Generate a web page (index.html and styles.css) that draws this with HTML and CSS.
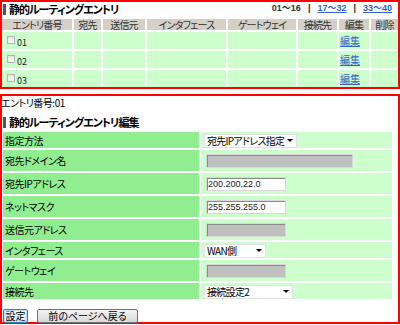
FILE: index.html
```html
<!DOCTYPE html>
<html lang="ja">
<head>
  <meta charset="UTF-8" />
  <title>静的ルーティングエントリ</title>
  <link rel="stylesheet" href="styles.css">
</head>
<body>
  <div class="box list-box">
    <div class="box-head">
      <h2 class="title">静的ルーティングエントリ</h2>
      <div class="pager">
        <span class="current">01～16</span>
        <span class="sep">|</span>
        <a href="#">17～32</a>
        <span class="sep">|</span>
        <a href="#">33～40</a>
      </div>
    </div>
    <table class="list">
      <thead>
        <tr>
          <th class="c-no">エントリ番号</th>
          <th class="c-dst">宛先</th>
          <th class="c-src">送信元</th>
          <th class="c-if">インタフェース</th>
          <th class="c-gw">ゲートウェイ</th>
          <th class="c-con">接続先</th>
          <th class="c-edit">編集</th>
          <th class="c-del">削除</th>
        </tr>
      </thead>
      <tbody>
        <tr>
          <td class="no"><span class="check"></span><span class="num">01</span></td>
          <td></td><td></td><td></td><td></td><td></td>
          <td class="edit"><a href="#">編集</a></td>
          <td></td>
        </tr>
        <tr>
          <td class="no"><span class="check"></span><span class="num">02</span></td>
          <td></td><td></td><td></td><td></td><td></td>
          <td class="edit"><a href="#">編集</a></td>
          <td></td>
        </tr>
        <tr>
          <td class="no"><span class="check"></span><span class="num">03</span></td>
          <td></td><td></td><td></td><td></td><td></td>
          <td class="edit"><a href="#">編集</a></td>
          <td></td>
        </tr>
      </tbody>
    </table>
  </div>

  <div class="box edit-box">
    <div class="entry-no">エントリ番号:01</div>
    <h2 class="title">静的ルーティングエントリ編集</h2>
    <table class="form">
      <tr class="row-sel">
        <th>指定方法</th>
        <td><span class="sel sel-method"><select><option>宛先IPアドレス指定</option></select></span></td>
      </tr>
      <tr>
        <th>宛先ドメイン名</th>
        <td><input type="text" class="text text-long" disabled></td>
      </tr>
      <tr>
        <th>宛先IPアドレス</th>
        <td><input type="text" class="text" value="200.200.22.0"></td>
      </tr>
      <tr>
        <th>ネットマスク</th>
        <td><input type="text" class="text" value="255.255.255.0"></td>
      </tr>
      <tr>
        <th>送信元アドレス</th>
        <td><input type="text" class="text" disabled></td>
      </tr>
      <tr class="row-sel">
        <th>インタフェース</th>
        <td><span class="sel sel-if"><select><option>WAN側</option></select></span></td>
      </tr>
      <tr>
        <th>ゲートウェイ</th>
        <td><input type="text" class="text" disabled></td>
      </tr>
      <tr class="row-sel">
        <th>接続先</th>
        <td><span class="sel sel-con"><select><option>接続設定2</option></select></span></td>
      </tr>
    </table>
    <div class="buttons">
      <button class="btn btn-set">設定</button>
      <button class="btn btn-back">前のページへ戻る</button>
    </div>
  </div>
</body>
</html>
```

FILE: styles.css
```css
body {
  margin: 0;
  font-family: "Noto Sans CJK JP", "Noto Sans", sans-serif;
  font-size: 10px;
  font-feature-settings: "palt";
  color: #000;
  background: #fff;
}

select, input, button {
  font-feature-settings: "palt";
}

.box {
  border: 2px solid #f00;
  box-sizing: border-box;
}

.list-box {
  height: 89px;
}

.edit-box {
  margin-top: 5px;
  height: 230px;
}

/* section titles */
.title {
  display: flex;
  align-items: center;
  gap: 3px;
  margin: 0;
  padding-left: 1px;
  font-size: 11px;
  font-weight: bold;
  letter-spacing: -1px;
  line-height: 15px;
  height: 15px;
}

.title::before {
  content: "";
  width: 3px;
  height: 11px;
  background: #555;
}

.box-head {
  display: flex;
  justify-content: space-between;
  align-items: flex-start;
  height: 15px;
}

.box-head .title {
  padding-top: 1px;
  height: 13px;
  line-height: 13px;
}

.pager {
  display: flex;
  padding: 1px 6px 0 0;
  font-family: "Liberation Sans", "Noto Sans CJK JP", sans-serif;
  font-size: 9px;
  font-weight: bold;
  line-height: 11px;
  color: #333;
}

.pager a {
  color: #36c;
}

.pager .sep {
  margin: 0 7px;
  color: #222;
}

/* entry list */
.list {
  table-layout: fixed;
  width: 400px;
  margin: 0 0 -2px -2px;
  border-spacing: 2px;
}

.list th,
.list td {
  padding: 0;
}

.list th {
  height: 11px;
  line-height: 11px;
  background: #d4d0c8;
  color: #333;
  font-weight: normal;
  font-size: 10px;
  letter-spacing: -0.8px;
  text-align: center;
  white-space: nowrap;
}

.list td {
  height: 17px;
  line-height: 12px;
  background: #ccffcc;
}

.c-no { width: 70px; }
.c-dst { width: 27px; }
.c-src { width: 42px; }
.c-if { width: 79px; }
.c-gw { width: 68px; }
.c-con { width: 39px; }
.c-edit { width: 30px; }
.c-del { width: 27px; }

.list td.no {
  padding-left: 5px;
  white-space: nowrap;
}

.check {
  display: inline-block;
  width: 8px;
  height: 8px;
  box-sizing: border-box;
  border: 1px solid #b4b4b4;
  background: linear-gradient(#e6e6e6, #fafafa);
  vertical-align: -1px;
}

.num {
  margin-left: 2px;
  font-size: 9px;
  vertical-align: -3px;
  color: #222;
}

.list td.edit {
  padding-left: 1px;
}

.edit a {
  color: #36c;
}

/* edit form */
.entry-no {
  line-height: 14px;
  margin-left: -1px;
  letter-spacing: -0.5px;
}

.edit-box .title {
  margin-top: 4px;
  height: 16px;
}

.form {
  width: 393px;
  margin-left: -1px;
  border-spacing: 2px;
  table-layout: fixed;
}

.form th,
.form td {
  height: 21px;
  padding: 0;
  font-size: 10px;
}

.form .row-sel th,
.form .row-sel td {
  height: 16px;
}

.form th {
  width: 194px;
  padding-left: 2px;
  text-align: left;
  font-weight: normal;
  letter-spacing: -0.5px;
  background: #90ee90;
}

.form td {
  padding-left: 3px;
  background: #ccffcc;
}

.text {
  display: block;
  width: 80px;
  height: 14px;
  box-sizing: border-box;
  margin: 1px 0 0 2px;
  padding: 0 1px;
  border: 1px solid #d8d8d8;
  box-shadow: inset 1px 1px 0 #8a8a8a;
  background: #fff;
  font-family: "Liberation Sans", sans-serif;
  font-size: 9px;
  color: #222;
  outline: none;
}

.text:disabled {
  background: #c0c0c0;
}

.text-long {
  width: 147px;
}

.sel {
  position: relative;
  display: block;
}

.sel select {
  appearance: none;
  width: 100%;
  height: 14px;
  margin: 0;
  padding: 0 0 0 2px;
  border: 1px solid #e2e2e2;
  border-radius: 0;
  background: #fff;
  font-family: inherit;
  font-size: 10px;
  letter-spacing: -0.7px;
  line-height: 12px;
  color: #000;
}

.sel::after {
  content: "";
  position: absolute;
  right: 4px;
  top: 6px;
  border-left: 3px solid transparent;
  border-right: 3px solid transparent;
  border-top: 3px solid #000;
}

.sel-method { width: 93px; }
.sel-if { width: 62px; }
.sel-con { width: 89px; }

/* buttons */
.buttons {
  display: flex;
  gap: 9px;
  margin-top: 8px;
  padding-left: 1px;
}

.btn {
  height: 14px;
  padding: 0;
  border: 1px solid #707070;
  border-radius: 2px;
  background: linear-gradient(#f4f4f4, #dadada);
  font-family: inherit;
  font-size: 10px;
  line-height: 12px;
  color: #000;
}

.btn-set {
  width: 25px;
  border-color: #3c7fb1;
  box-shadow: inset 0 0 0 1px #b8dcf4;
  background: linear-gradient(#f2f8fc, #d8ecfa);
}

.btn-back {
  width: 101px;
}
```
